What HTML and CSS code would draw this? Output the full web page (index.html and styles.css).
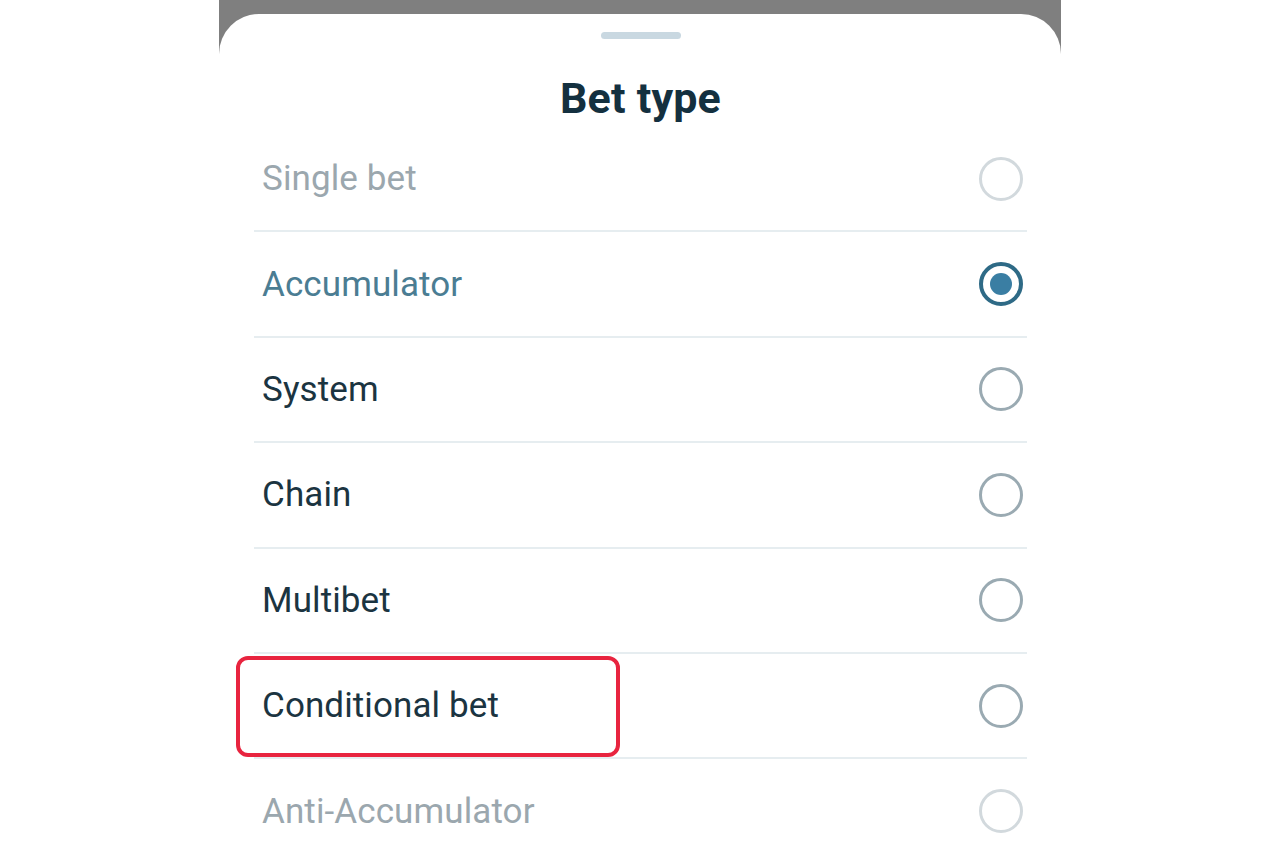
FILE: index.html
```html
<!DOCTYPE html>
<html>
<head>
<meta charset="utf-8">
<link rel="stylesheet" href="styles.css">
</head>
<body>
<div class="phone">
  <div class="sheet">
    <div class="handle"></div>
    <h1 class="title">Bet type</h1>
    <ul class="list">
      <li class="row muted"><span class="label">Single bet</span><span class="radio"></span></li>
      <li class="row active"><span class="label">Accumulator</span><span class="radio on"></span></li>
      <li class="row"><span class="label">System</span><span class="radio"></span></li>
      <li class="row"><span class="label">Chain</span><span class="radio"></span></li>
      <li class="row"><span class="label">Multibet</span><span class="radio"></span></li>
      <li class="row highlighted"><span class="label">Conditional bet</span><span class="radio"></span><span class="mark"></span></li>
      <li class="row muted last"><span class="label">Anti-Accumulator</span><span class="radio"></span></li>
    </ul>
  </div>
</div>
</body>
</html>
```

FILE: styles.css
```css
html, body {
  margin: 0;
  padding: 0;
  background: #ffffff;
  height: 853px;
  overflow: hidden;
  font-family: Roboto, "Noto Sans", Arial, sans-serif;
}
.phone {
  width: 842px;
  margin: 0 auto;
  height: 853px;
  background: #7f7f7f;
  padding-top: 14px;
  box-sizing: border-box;
}
.sheet {
  background: #ffffff;
  height: 100%;
  overflow: hidden;
  border-radius: 40px 40px 0 0;
  padding: 18px 34px 0 35px;
  box-sizing: border-box;
  display: flex;
  flex-direction: column;
}
.sheet > * { flex-shrink: 0; }
.handle {
  width: 80px;
  height: 7px;
  border-radius: 4px;
  background: #c9d8e1;
  align-self: center;
}
.title {
  margin: 0;
  margin-top: 39px;
  height: 49px;
  line-height: 40px;
  font-size: 43px;
  font-weight: 700;
  color: #14303f;
  text-align: center;
  letter-spacing: 0.2px;
}
.list {
  list-style: none;
  margin: 0;
  padding: 0;
}
.row {
  position: relative;
  height: 103.4px;
  border-bottom: 2px solid #e6edf0;
  display: flex;
  align-items: center;
  justify-content: space-between;
  padding: 0 4px 0 8px;
}
.row.last { border-bottom: none; }
.label {
  font-size: 35px;
  color: #1b3441;
  letter-spacing: 0.1px;
}
.row.muted .label { color: #9ba7ae; }
.row.active .label { color: #4b7d93; }
.radio {
  width: 38px;
  height: 38px;
  border: 3px solid #9aaab2;
  border-radius: 50%;
  box-sizing: content-box;
  display: flex;
  align-items: center;
  justify-content: center;
}
.row.muted .radio { border-color: #d2d9dd; }
.radio.on {
  border: 4px solid #2e6a86;
  width: 36px;
  height: 36px;
}
.radio.on::after {
  content: "";
  width: 22px;
  height: 22px;
  border-radius: 50%;
  background: #3a7ea3;
}
.mark {
  position: absolute;
  left: -18px;
  top: 2px;
  width: 376px;
  height: 93px;
  border: 4.5px solid #e8243f;
  border-radius: 12px;
}
```
